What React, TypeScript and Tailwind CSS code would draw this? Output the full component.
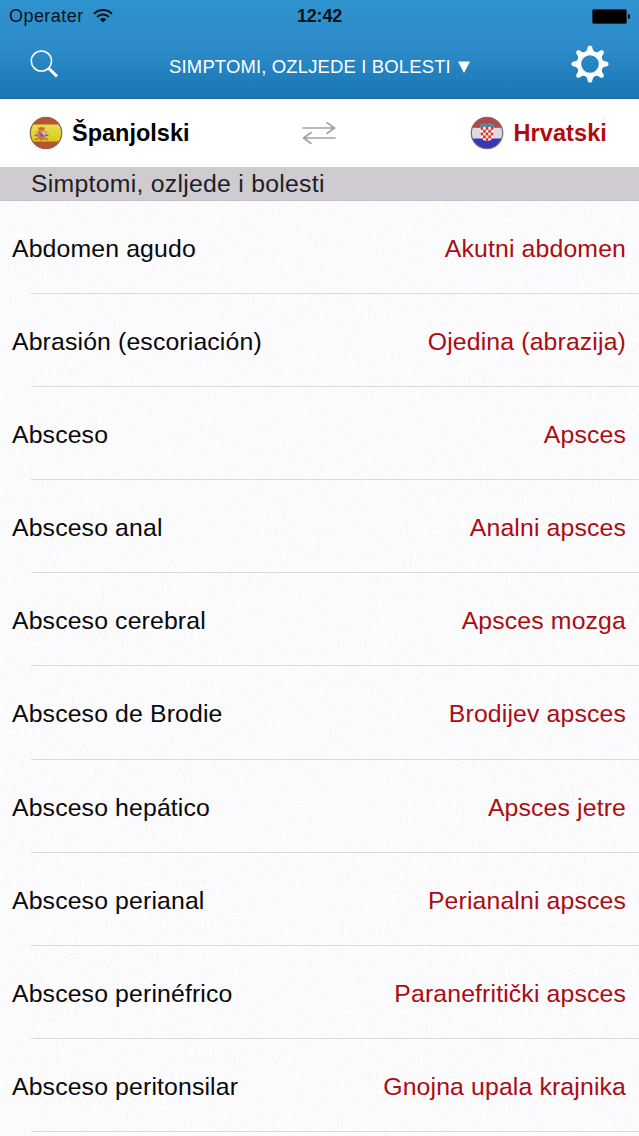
import type { ReactNode } from 'react';

type Term = {
  source: string;
  target: string;
};

const terms: Term[] = [
  { source: 'Abdomen agudo', target: 'Akutni abdomen' },
  { source: 'Abrasión (escoriación)', target: 'Ojedina (abrazija)' },
  { source: 'Absceso', target: 'Apsces' },
  { source: 'Absceso anal', target: 'Analni apsces' },
  { source: 'Absceso cerebral', target: 'Apsces mozga' },
  { source: 'Absceso de Brodie', target: 'Brodijev apsces' },
  { source: 'Absceso hepático', target: 'Apsces jetre' },
  { source: 'Absceso perianal', target: 'Perianalni apsces' },
  { source: 'Absceso perinéfrico', target: 'Paranefritički apsces' },
  { source: 'Absceso peritonsilar', target: 'Gnojna upala krajnika' },
];

const gearAngles = [0, 45, 90, 135, 180, 225, 270, 315];

function WifiIcon() {
  return (
    <svg width="20" height="14" viewBox="0 0 20 14" fill="none" stroke="#06131c" strokeWidth="2.1">
      <path d="M1 4.7a12.7 12.7 0 0 1 18 0" />
      <path d="M4.1 7.9a8.3 8.3 0 0 1 11.8 0" />
      <path d="M6.8 10.4a4.6 4.6 0 0 1 6.4 0L10 13.6z" fill="#06131c" stroke="none" />
    </svg>
  );
}

function SearchIcon() {
  return (
    <svg width="28" height="28" viewBox="0 0 28 28" fill="none" stroke="white">
      <circle cx="11.4" cy="11" r="10.1" strokeWidth="1.5" />
      <path d="M18.6 18.2l8.4 8.2" strokeWidth="3" />
    </svg>
  );
}

function GearIcon() {
  return (
    <svg width="38" height="38" viewBox="-19 -19 38 38" fill="white">
      <circle r="11" fill="none" stroke="white" strokeWidth="4.4" />
      {gearAngles.map(angle => (
        <path
          key={angle}
          transform={`rotate(${angle})`}
          d="M-4.4-12Q-2.7-13.4-2.2-17Q-2-18.6 0-18.6Q2-18.6 2.2-17Q2.7-13.4 4.4-12z"
        />
      ))}
    </svg>
  );
}

function SwapIcon() {
  return (
    <svg width="34" height="23" viewBox="0 0 34 23" fill="none" stroke="#a3a1a5" strokeWidth="1.7">
      <path d="M.5 6h32M24.5.3l8 5.7-8 5.7" />
      <path d="M33.5 16h-32M9.5 10.3l-8 5.7 8 5.7" />
    </svg>
  );
}

function SpanishFlag() {
  return (
    <svg width="34" height="34" viewBox="0 0 34 34">
      <defs>
        <clipPath id="es-clip">
          <circle cx="17" cy="17" r="16" />
        </clipPath>
        <linearGradient id="es-gold" x1="0" y1="0" x2="0" y2="1">
          <stop offset="0" stopColor="#e6df4c" />
          <stop offset="1" stopColor="#d8cc16" />
        </linearGradient>
      </defs>
      <g clipPath="url(#es-clip)">
        <rect width="34" height="34" fill="#b65336" />
        <rect y="8.5" width="34" height="17" fill="url(#es-gold)" />
        <path d="M6.3 15h2v8h-2zM16.7 15h2v8h-2z" fill="#dcae84" />
        <path d="M8.6 14.8h8v5.6q0 3.6-4 4-4-.4-4-4z" fill="#d9703f" />
        <path d="M9 10.8l2 1.2 1.5-1.8 1.5 1.8 2-1.2-.8 3.6H9.8z" fill="#cf6434" />
        <path d="M12.6 15.4h3.4v3.4h-3.4z" fill="#e2c4b4" />
        <circle cx="12.6" cy="19" r="1.7" fill="#5272b4" />
        <path d="M5.6 19.4h3M16.4 19.4h3M5.8 23.4h2.8M16.4 23.4h2.8" stroke="#c14f3c" strokeWidth="1.2" />
      </g>
      <circle cx="17" cy="17" r="15.7" fill="none" stroke="#8e6b48" strokeWidth="1.3" />
    </svg>
  );
}

function CroatianFlag() {
  const checks: ReactNode[] = [];
  for (let row = 0; row < 5; row++) {
    for (let col = 0; col < 5; col++) {
      if ((row + col) % 2 === 0) {
        checks.push(
          <rect key={`${row}-${col}`} x={10.5 + col * 2.6} y={11 + row * 2.8} width="2.6" height="2.8" fill="#d9332d" />
        );
      }
    }
  }

  return (
    <svg width="34" height="34" viewBox="0 0 34 34">
      <defs>
        <clipPath id="hr-clip">
          <circle cx="17" cy="17" r="16" />
        </clipPath>
        <clipPath id="hr-shield">
          <path d="M10.5 11h13v9q0 4-6.5 5.2Q10.5 24 10.5 20z" />
        </clipPath>
      </defs>
      <g clipPath="url(#hr-clip)">
        <rect width="34" height="34" fill="#dcdce0" />
        <rect width="34" height="11.8" fill="#b94542" />
        <rect y="22.5" width="34" height="12" fill="#3438b4" />
        <g clipPath="url(#hr-shield)">
          <rect x="10" y="11" width="14" height="15" fill="#f5eeee" />
          {checks}
        </g>
        <path d="M9.6 7.2l3 1.2 2-1.9 2.6 1.5 2.6-1.5 2 1.9 3-1.2-.9 3.8H10.5z" fill="#518ea6" />
        <path d="M12.8 8.8v2M17.2 8.2v2.6M21.6 8.8v2" stroke="#b85c62" strokeWidth=".9" />
      </g>
      <circle cx="17" cy="17" r="15.7" fill="none" stroke="#77707f" strokeWidth="1.3" />
    </svg>
  );
}

// Faint embossed grain that sits behind the list rows
function PaperTexture() {
  return (
    <svg className="absolute inset-0 h-full w-full" aria-hidden="true">
      <filter id="paper" x="0" y="0" width="100%" height="100%">
        <feTurbulence type="fractalNoise" baseFrequency="0.26" numOctaves="3" seed="7" result="noise" />
        <feDiffuseLighting in="noise" lightingColor="#ffffff" surfaceScale="1.2">
          <feDistantLight azimuth="225" elevation="66" />
        </feDiffuseLighting>
      </filter>
      <rect width="100%" height="100%" filter="url(#paper)" opacity="0.12" />
    </svg>
  );
}

function StatusBar() {
  return (
    <div className="grid h-8 grid-cols-3 items-center pl-[9px] pr-[9px] text-[#06131c]">
      <div className="flex items-center gap-[9px]">
        <span className="text-[18px] leading-8 tracking-[0.45px]">Operater</span>
        <WifiIcon />
      </div>
      <span className="text-center text-[18px] font-bold leading-8 tracking-[-0.2px]">12:42</span>
      <div className="flex items-center justify-end gap-px">
        <div className="h-[15px] w-[35px] rounded-[2px] border border-[#0b3550] bg-black" />
        <div className="h-[5px] w-[2px] rounded-r-sm bg-black" />
      </div>
    </div>
  );
}

function NavBar() {
  return (
    <div className="flex h-[63px] items-center justify-between pl-[30px] pr-[30px]">
      <button aria-label="Search" className="w-[38px]">
        <SearchIcon />
      </button>
      <button className="flex items-center gap-[7px] pt-[7px] text-[18.5px] tracking-[0.13px] text-white">
        <span className="whitespace-nowrap">SIMPTOMI, OZLJEDE I BOLESTI</span>
        <svg width="12" height="12" viewBox="0 0 12 12" fill="white">
          <path d="M0 .5h12L6 12z" />
        </svg>
      </button>
      <button aria-label="Settings">
        <GearIcon />
      </button>
    </div>
  );
}

function LanguageBar() {
  return (
    <div className="flex h-[68px] items-center justify-between bg-white pl-[29px] pr-8 text-[23.5px] font-bold">
      <div className="flex w-[201px] items-center gap-[9px] text-black">
        <SpanishFlag />
        <span className="pt-[2px]">Španjolski</span>
      </div>
      <SwapIcon />
      <div className="flex w-[199px] items-center justify-end gap-[9px] text-[#b20a0e]">
        <CroatianFlag />
        <span className="pt-[2px] tracking-[0.1px]">Hrvatski</span>
      </div>
    </div>
  );
}

function TermRow({ source, target }: Term) {
  return (
    <li className="flex h-[93.1px] shrink-0 flex-col">
      <div className="flex flex-1 items-center justify-between pl-3 pr-[13px] pt-[3px] text-[24.8px] tracking-[0.14px]">
        <span className="text-[#09090b]">{source}</span>
        <span className="text-[#aa0c12]">{target}</span>
      </div>
      <div className="ml-[31px] h-px bg-[#dad9dc]" />
    </li>
  );
}

export default function App() {
  return (
    <div className="flex h-[1136px] w-[639px] flex-col overflow-hidden bg-[#fdfcfe] font-['Liberation_Sans',Arial,sans-serif]">
      <header className="h-[99px] shrink-0 border-b-2 border-[#256da5] bg-linear-to-b from-[#2e93cf] via-[#2c8bc8] to-[#1a76b5]">
        <StatusBar />
        <NavBar />
      </header>
      <LanguageBar />
      <h2 className="h-[34px] shrink-0 border-b border-[#c5c2c7] bg-[#cfcbd1] pl-[31px] text-[24.8px] leading-[34px] tracking-[0.26px] text-[#202024]">
        Simptomi, ozljede i bolesti
      </h2>
      <main className="relative flex-1 overflow-hidden">
        <PaperTexture />
        <ul className="relative flex flex-col">
          {terms.map(term => (
            <TermRow key={term.source} {...term} />
          ))}
        </ul>
      </main>
    </div>
  );
}
